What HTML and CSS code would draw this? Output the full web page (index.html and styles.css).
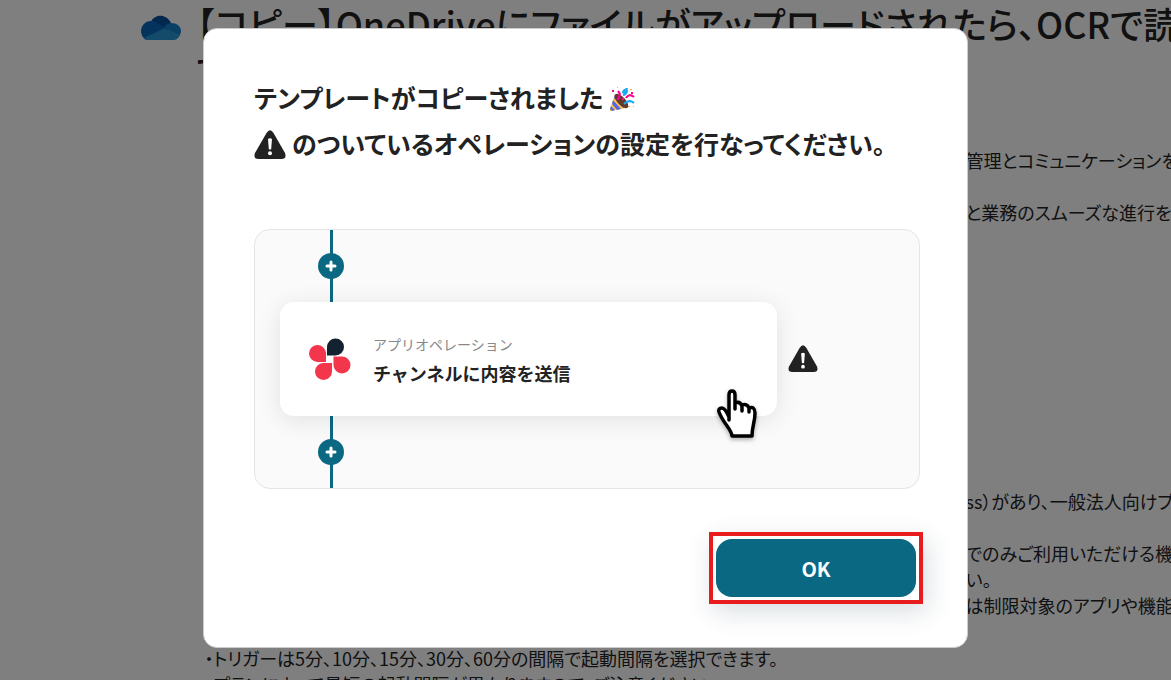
FILE: index.html
```html
<!DOCTYPE html>
<html lang="ja">

<head>
  <meta charset="utf-8">
  <title>テンプレートのコピー</title>
  <link rel="stylesheet" href="styles.css">
</head>
<body>

<main class="page">
  <header class="title-row">
    <svg class="cloud" viewBox="0 0 40 26" aria-hidden="true">
      <path d="M10 7C13-1 25-2 30 8L27 15 14 18Z" fill="#0550a0"/>
      <path d="M10 6C4 6 0 11 0 16C0 20 2 23 5 25L27 15 18 9C15 7 13 6 10 6Z" fill="#0868bd"/>
      <path d="M30 8C28 8 26 9 23 12L38 21C43 15 38 8 30 8Z" fill="#1480cc"/>
      <path d="M3 23L24 13 39 20C37 24 35 25 32 25H9C7 25 5 25 3 23Z" fill="#2896d4"/>
    </svg>
    <h1>【コピー】OneDriveにファイルがアップロードされたら、OCRで読み取り<br>て通知する</h1>
  </header>

  <section class="side-text intro">
    <p>管理とコミュニケーションを</p>
    <p>と業務のスムーズな進行を</p>
  </section>

  <section class="side-text plans">
    <p>ss）があり、一般法人向けプラン</p>
    <p>でのみご利用いただける機能<br>い。<br>は制限対象のアプリや機能を</p>
  </section>

  <section class="notes">
    <p>・トリガーは5分、10分、15分、30分、60分の間隔で起動間隔を選択できます。</p>
    <p>・プランによって最短の起動間隔が異なりますので、ご注意ください。</p>
  </section>
</main>

<!-- warning mark, used in the heading and next to the card -->
<svg class="defs" aria-hidden="true">
  <symbol id="warning" viewBox="0 0 32 30">
    <path d="M12.500 3Q16-2.500 19.500 3L31 23Q33 29 27.500 29H4.500Q-1 29 1 23Z" fill="#222"/>
    <path d="M14 9Q16 7.500 18 9L17.200 19Q16 20.200 14.800 19Z" fill="#fff"/>
    <circle cx="16" cy="23.200" r="2" fill="#fff"/>
  </symbol>
</svg>

<div class="overlay">
  <div class="dialog" role="dialog" aria-modal="true" aria-labelledby="dialogTitle">
    <h2 id="dialogTitle">
      <span class="line">テンプレートがコピーされました
        <svg class="party" viewBox="0 0 26 26" aria-hidden="true">
          <path d="M6 8L18 20Q20 23 17 22L2 25Q0 25 1 23Z" fill="#ffc83d"/>
          <path d="M4 14L12 23 8 24 3 18ZM2 20L6 24 3 25 1 23ZM6 8L17 21 14 22 5 12Z" fill="#5567e8"/>
          <ellipse cx="12.500" cy="15" rx="4" ry="9" transform="rotate(-43 12.500 15)" fill="#63382d"/>
          <path d="M8 14Q13 9 9 5M17 12Q20 7 25 11" fill="none" stroke="#f70a8d" stroke-width="2.200"/>
          <path d="M15 18Q20 13 25 17M14 9Q17 9 18 5Q16 2 14 6Q16 9 18 2" fill="none" stroke="#19a9ee" stroke-width="2.200"/>
          <path d="M3 4h2v2H3zM22 6h2v2h-2zM13 12h2v2h-2z" fill="#f70a8d"/>
          <path d="M8 1h1v1H8zM21 3h2v1h-2zM19 20h2v1h-2zM24 20h1v1h-1z" fill="#ffb52b"/>
        </svg>
      </span>
      <span class="line">
        <svg class="warning" aria-label="警告"><use href="#warning"/></svg>
        のついているオペレーションの設定を行なってください。
      </span>
    </h2>

    <div class="panel">
      <div class="connector">
        <svg class="plus" width="26" height="26" viewBox="0 0 26 26" aria-hidden="true"><circle cx="13" cy="13" r="13" fill="#0b6882"/><path d="M13 9v8M9 13h8" stroke="#fff" stroke-width="3" stroke-linecap="round"/></svg>
      </div>
      <div class="step">
        <div class="card">
          <svg class="app-logo" viewBox="0 0 42 42" aria-hidden="true">
            <path d="M18 17V9a8.500 8.500 0 1 1 8.500 8.500H18Z" fill="#132231"/>
            <path d="M17 24H9A8.500 8.500 0 1 1 17 15Z" fill="#f4364c"/>
            <path d="M24.500 18.500H33A8.500 8.500 0 1 1 24.500 27Z" fill="#f4364c"/>
            <path d="M23 25V33A8.500 8.500 0 1 1 15 25Z" fill="#f4364c"/>
          </svg>
          <div class="card-text">
            <p class="kind">アプリオペレーション</p>
            <p class="name">チャンネルに内容を送信</p>
          </div>
          <svg class="hand" viewBox="0 0 40 50" aria-hidden="true">
            <path d="M12 31V6Q12 2 15 2Q18 2 18 6V20V14Q23 12 25 17V22V16Q30 14 32 19V23V19Q38 17 38 24C38 33 35 37 35 47H15C15 41 6 34 2 23Q1 19 5 19Q8 19 12 28Z" fill="#fff" stroke="#000" stroke-width="3.500" stroke-linejoin="round"/>
          </svg>
        </div>
        <svg class="warning" aria-label="警告"><use href="#warning"/></svg>
      </div>
      <div class="connector">
        <svg class="plus" width="26" height="26" viewBox="0 0 26 26" aria-hidden="true"><circle cx="13" cy="13" r="13" fill="#0b6882"/><path d="M13 9v8M9 13h8" stroke="#fff" stroke-width="3" stroke-linecap="round"/></svg>
      </div>
    </div>

    <div class="actions">
      <div class="highlight"><button type="button" class="ok">OK</button></div>
    </div>
  </div>
</div>

</body>
</html>
```
FILE: styles.css
```css
* {
  box-sizing: border-box;
}

body {
  margin: 0;
  height: 100vh;
  overflow: hidden;
  font-family: "Noto Sans CJK JP", sans-serif;
  background: #fff;
  color: #222;
}

h1, h2, p {
  margin: 0;
}

svg {
  display: block;
  flex: none;
}

.defs {
  display: none;
}

/* Page behind the dialog */
.page {
  height: 100vh;
  overflow: hidden;
  padding-left: calc(50% - 445px);
  font-size: 18px;
  line-height: 26px;
  white-space: nowrap;
  font-feature-settings: "palt";
}

.title-row {
  display: flex;
  gap: 16px;
  height: 147px;
}

.cloud {
  width: 40px;
  height: 26px;
  margin-top: 15px;
}

h1 {
  font-size: 36px;
  line-height: 46px;
  font-weight: 500;
}

.side-text {
  padding-left: 825px;
}

.side-text p + p {
  margin-top: 26px;
}

.plans {
  margin-top: 263px;
}

.notes {
  padding-left: 64px;
  margin-top: 27px;
}

/* Dialog */
.overlay {
  position: fixed;
  inset: 0;
  display: flex;
  align-items: center;
  justify-content: center;
  padding-bottom: 4px;
  background: rgba(0, 0, 0, 0.5);
}

.dialog {
  width: 765px;
  max-width: 90%;
  padding: 45px 44px 43px 50px;
  background: #fff;
  border: 1px solid #ccc;
  border-radius: 14px;
}

h2 {
  font-size: 25px;
  line-height: 46px;
  font-weight: 700;
  font-feature-settings: "palt";
}

.line {
  display: flex;
  align-items: center;
  gap: 6px;
}

.line svg {
  margin-top: 4px;
}

.party {
  width: 26px;
  height: 26px;
}

.warning {
  width: 32px;
  height: 30px;
}

/* Workflow preview */
.panel {
  margin: 63px 3px 43px 0;
  background: #fafafa;
  border: 1px solid #e5e5e5;
  border-radius: 16px;
}

.connector {
  height: 72px;
  width: 26px;
  margin-left: 63px;
  display: flex;
  align-items: center;
  background: linear-gradient(#0b6882, #0b6882) center / 3px 100% no-repeat;
}

.step {
  display: flex;
  align-items: center;
  gap: 11px;
  padding: 0 101px 0 25px;
}

.card {
  position: relative;
  display: flex;
  align-items: center;
  gap: 22px;
  flex: 1;
  height: 114px;
  padding-left: 29px;
  background: #fff;
  border-radius: 14px;
  box-shadow: 0 4px 24px rgba(0, 0, 0, 0.1);
}

.app-logo {
  width: 42px;
  height: 42px;
}

.step .warning {
  width: 30px;
  height: 28px;
}

.kind {
  color: #888;
  font-size: 14px;
  line-height: 28px;
}

.name {
  font-size: 18px;
  line-height: 30px;
  font-weight: 700;
}

.hand {
  position: absolute;
  right: 20px;
  bottom: -23px;
  width: 40px;
  height: 50px;
  filter: drop-shadow(0 2px 2px rgba(0, 0, 0, 0.3));
}

/* Button */
.actions {
  display: flex;
  justify-content: flex-end;
}

.highlight {
  padding: 3px;
  border: 4px solid #e81c1c;
  box-shadow: 4px 8px 26px rgba(20, 50, 70, 0.16);
}

.ok {
  display: block;
  width: 200px;
  height: 58px;
  padding: 0;
  border: none;
  border-radius: 16px;
  background: #0b6882;
  color: #fff;
  font: 700 20px "Noto Sans CJK JP", sans-serif;
  cursor: pointer;
}
```
